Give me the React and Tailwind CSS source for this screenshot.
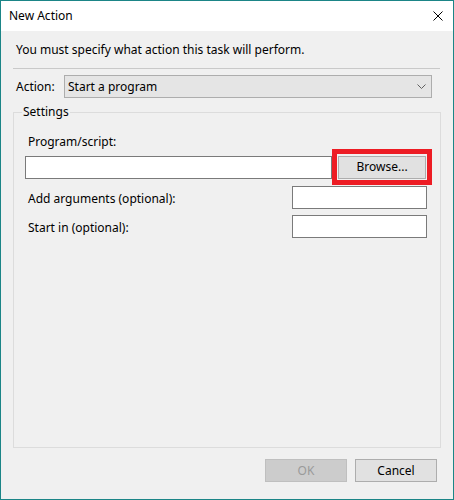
const App = () => {
  return (
    <div className="w-[454px] h-[500px] border border-[#1b8587] flex flex-col font-['Noto_Sans',sans-serif] text-[12px] text-black overflow-hidden">
      <div className="h-[30px] bg-white flex items-center justify-between pl-[8px] pr-[10px]">
        <span className="leading-[16px]">New Action</span>
        <svg width="10" height="10" viewBox="0 0 10 10" className="text-black">
          <path d="M0.5 0.5 L9.5 9.5 M9.5 0.5 L0.5 9.5" stroke="currentColor" strokeWidth="1" fill="none" />
        </svg>
      </div>

      <div className="flex-1 bg-[#f0f0f0] flex flex-col px-[12px]">
        <p className="mt-[11px] pl-[3px] leading-[16px]">You must specify what action this task will perform.</p>
        <div className="mt-[10px] h-px w-[427px] bg-[#c9c9c9]" />

        <div className="mt-[6px] flex items-center">
          <span className="pl-[3px] w-[51px] leading-[16px]">Action:</span>
          <div className="w-[368px] h-[23px] border border-[#adadad] bg-[#e5e5e5] flex items-center justify-between pl-[3px] pr-[5px]">
            <span className="leading-[16px]">Start a program</span>
            <svg width="9" height="5" viewBox="0 0 9 5">
              <path d="M0.5 0.5 L4.5 4.5 L8.5 0.5" stroke="#606060" strokeWidth="1" fill="none" />
            </svg>
          </div>
        </div>

        <div className="relative mt-[14px] h-[336px] border border-[#dcdcdc] flex flex-col pl-[11px]">
          <span className="absolute left-[8px] top-[-9px] px-[1px] bg-[#f0f0f0] leading-[16px]">Settings</span>

          <span className="mt-[22px] pl-[3px] leading-[14px]">Program/script:</span>

          <div className="flex items-center h-[36px] pr-[8px]">
            <div className="w-[308px] h-[23px] border border-[#7a7a7a] bg-white" />
            <div className="ml-auto w-[100px] h-[36px] border-[5px] border-[#ed1c24] flex items-center justify-center">
              <button className="w-[88px] h-[23px] border border-[#adadad] bg-[#e1e1e1] leading-[16px]">Browse...</button>
            </div>
          </div>

          <div className="mt-[1px] flex items-center justify-between pr-[13px]">
            <span className="pl-[3px] leading-[16px] pt-[2px]">Add arguments (optional):</span>
            <div className="w-[135px] h-[23px] border border-[#7a7a7a] bg-white" />
          </div>

          <div className="mt-[6px] flex items-center justify-between pr-[13px]">
            <span className="pl-[3px] leading-[16px] pt-[2px]">Start in (optional):</span>
            <div className="w-[135px] h-[23px] border border-[#7a7a7a] bg-white" />
          </div>
        </div>

        <div className="mt-[11px] flex justify-end gap-[8px] pr-[4px]">
          <button className="w-[82px] h-[23px] border border-[#bfbfbf] bg-[#cccccc] text-[#9a9a9a] leading-[16px]" disabled>OK</button>
          <button className="w-[82px] h-[23px] border border-[#adadad] bg-[#e1e1e1] leading-[16px]">Cancel</button>
        </div>
      </div>
    </div>
  );
};

export default App;
